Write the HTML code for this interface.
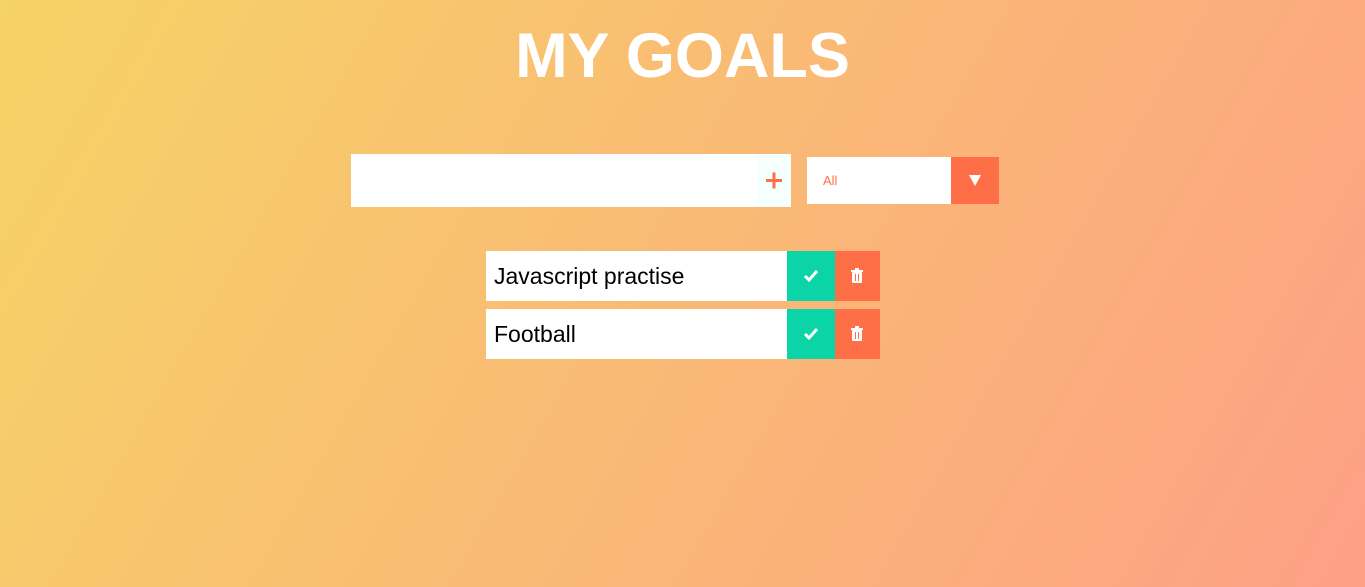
<!DOCTYPE html>
<html><head><style>
html,body{margin:0;padding:0}
body{width:1365px;height:587px;overflow:hidden;background:linear-gradient(120deg,#f6d365,#fda085);font-family:"Liberation Sans",sans-serif;position:relative}
h1{position:absolute;top:20px;left:0;width:1365px;margin:0;text-align:center;color:#fff;font-size:63px;font-weight:bold;line-height:72px}
.inp{position:absolute;left:351px;top:154px;width:406px;height:53px;background:#fff}
.plus{position:absolute;left:757px;top:154px;width:34px;height:53px;background:#f5fffd}
.sel{position:absolute;left:807px;top:157px;width:144px;height:47px;background:#fff;color:#ff6f47;font-size:13px;line-height:47px;padding-left:16px;box-sizing:border-box}
.arr{position:absolute;left:951px;top:157px;width:48px;height:47px;background:#ff6f47}
.row{position:absolute;left:486px;width:394px;height:50px}
.txt{position:absolute;left:0;top:0;width:301px;height:50px;background:#fff;font-size:23px;line-height:50px;padding-left:8px;box-sizing:border-box;color:#000}
.chk{position:absolute;left:301px;top:0;width:48px;height:50px;background:#0bd4a6}
.del{position:absolute;left:349px;top:0;width:45px;height:50px;background:#ff6f47}
svg{position:absolute}
</style></head><body>
<h1>MY GOALS</h1>
<div class="inp"></div>
<div class="plus"><svg width="34" height="53"><rect x="9" y="25" width="16" height="3" fill="#ff6f47"/><rect x="15.5" y="18.5" width="3" height="16" fill="#ff6f47"/></svg></div>
<div class="sel">All</div>
<div class="arr"><svg width="48" height="47"><polygon points="18,18 30,18 24,29" fill="#fff"/></svg></div>
<div class="row" style="top:251px"><div class="txt">Javascript practise</div>
<div class="chk"><svg width="48" height="50"><polyline points="18,25 22,29 30,20" fill="none" stroke="#fff" stroke-width="3"/></svg></div>
<div class="del"><svg width="45" height="50"><rect x="16" y="19" width="12" height="2" fill="#fff"/><rect x="20" y="17" width="4" height="2" fill="#fff"/><rect x="17" y="21" width="10" height="11" rx="1" fill="#fff"/><rect x="20" y="23" width="1" height="7" fill="#ff6f47"/><rect x="23" y="23" width="1" height="7" fill="#ff6f47"/></svg></div></div>
<div class="row" style="top:309px"><div class="txt">Football</div>
<div class="chk"><svg width="48" height="50"><polyline points="18,25 22,29 30,20" fill="none" stroke="#fff" stroke-width="3"/></svg></div>
<div class="del"><svg width="45" height="50"><rect x="16" y="19" width="12" height="2" fill="#fff"/><rect x="20" y="17" width="4" height="2" fill="#fff"/><rect x="17" y="21" width="10" height="11" rx="1" fill="#fff"/><rect x="20" y="23" width="1" height="7" fill="#ff6f47"/><rect x="23" y="23" width="1" height="7" fill="#ff6f47"/></svg></div></div>
</body></html>
